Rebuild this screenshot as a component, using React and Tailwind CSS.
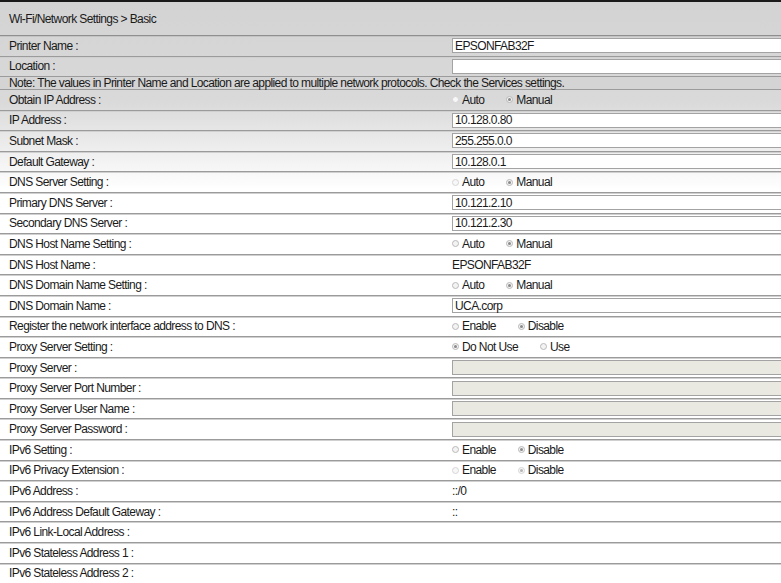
import React from 'react';

const rows = [
  { label: 'Obtain IP Address :', type: 'radio', options: ['Auto', 'Manual'], selected: 1, faded: [0] },
  { label: 'IP Address :', type: 'input', value: '10.128.0.80' },
  { label: 'Subnet Mask :', type: 'input', value: '255.255.0.0' },
  { label: 'Default Gateway :', type: 'input', value: '10.128.0.1' },
  { label: 'DNS Server Setting :', type: 'radio', options: ['Auto', 'Manual'], selected: 1, faded: [0] },
  { label: 'Primary DNS Server :', type: 'input', value: '10.121.2.10' },
  { label: 'Secondary DNS Server :', type: 'input', value: '10.121.2.30' },
  { label: 'DNS Host Name Setting :', type: 'radio', options: ['Auto', 'Manual'], selected: 1 },
  { label: 'DNS Host Name :', type: 'text', value: 'EPSONFAB32F' },
  { label: 'DNS Domain Name Setting :', type: 'radio', options: ['Auto', 'Manual'], selected: 1 },
  { label: 'DNS Domain Name :', type: 'input', value: 'UCA.corp' },
  { label: 'Register the network interface address to DNS :', type: 'radio', options: ['Enable', 'Disable'], selected: 1 },
  { label: 'Proxy Server Setting :', type: 'radio', options: ['Do Not Use', 'Use'], selected: 0 },
  { label: 'Proxy Server :', type: 'disabled' },
  { label: 'Proxy Server Port Number :', type: 'disabled' },
  { label: 'Proxy Server User Name :', type: 'disabled' },
  { label: 'Proxy Server Password :', type: 'disabled' },
  { label: 'IPv6 Setting :', type: 'radio', options: ['Enable', 'Disable'], selected: 1 },
  { label: 'IPv6 Privacy Extension :', type: 'radio', options: ['Enable', 'Disable'], selected: 1, faded: [0, 1] },
  { label: 'IPv6 Address :', type: 'text', value: '::/0' },
  { label: 'IPv6 Address Default Gateway :', type: 'text', value: '::' },
  { label: 'IPv6 Link-Local Address :', type: 'text', value: '' },
  { label: 'IPv6 Stateless Address 1 :', type: 'text', value: '' },
  { label: 'IPv6 Stateless Address 2 :', type: 'text', value: '' },
];

function Radio({ checked, faded }) {
  return (
    <span
      className={
        'flex items-center justify-center w-[7px] h-[7px] rounded-full border ' +
        (faded ? 'border-[#d6d6d6] bg-[#f7f7f7]' : 'border-[#b9b9b9] bg-[#f3f3f3]')
      }
    >
      {checked && <span className={'w-[3px] h-[3px] rounded-full ' + (faded ? 'bg-[#b5b5b5]' : 'bg-[#8a8a8a]')} />}
    </span>
  );
}

function TextBox({ value, disabled }) {
  return (
    <div
      className={
        'w-[340px] h-[15px] border border-[#a3a3a3] pl-[2px] flex items-center leading-none ' +
        (disabled ? 'bg-[#e9e9e2]' : 'bg-white')
      }
    >
      {value}
    </div>
  );
}

function Value({ row }) {
  if (row.type === 'input') return <TextBox value={row.value} />;
  if (row.type === 'disabled') return <TextBox disabled />;
  if (row.type === 'text') return <span>{row.value}</span>;
  return (
    <div className="flex items-center gap-[22px]">
      {row.options.map((opt, i) => (
        <label key={opt} className="flex items-center gap-[3px]">
          <Radio checked={row.selected === i} faded={row.faded && row.faded.includes(i)} />
          <span>{opt}</span>
        </label>
      ))}
    </div>
  );
}

function Row({ label, children }) {
  return (
    <div className="flex items-center h-[20.6px] border-b border-[#9b9b9b] shadow-[0_1px_0_#d0d0d0]">
      <div className="w-[452px] shrink-0 pl-[9px]">{label}</div>
      <div className="flex-1 flex items-center whitespace-nowrap">{children}</div>
    </div>
  );
}

export default function App() {
  return (
    <div
      className="w-[781px] h-[583px] overflow-hidden text-[12px] tracking-[-0.6px] text-[#1a1a1a] bg-[linear-gradient(to_bottom,#d3d3d3_0px,#d9d9d9_100px,#ffffff_190px)]"
      style={{ fontFamily: '"Liberation Sans", Arial, sans-serif' }}
    >
      {/* Title bar */}
      <div className="h-[36px] border-t-2 border-[#1a1a1a] border-b border-b-[#8f8f8f] shadow-[0_1px_0_#c4c4c4] flex items-center pl-[9px]">
        Wi-Fi/Network Settings &gt; Basic
      </div>

      <Row label="Printer Name :">
        <TextBox value="EPSONFAB32F" />
      </Row>
      <Row label="Location :">
        <TextBox value="" />
      </Row>

      {/* Note */}
      <div className="h-[12.8px] flex items-center pl-[9px] border-b border-[#9b9b9b] bg-[#d4d4d4] whitespace-nowrap leading-none">
        Note: The values in Printer Name and Location are applied to multiple network protocols. Check the Services settings.
      </div>

      {rows.map((row) => (
        <Row key={row.label} label={row.label}>
          <Value row={row} />
        </Row>
      ))}
    </div>
  );
}
